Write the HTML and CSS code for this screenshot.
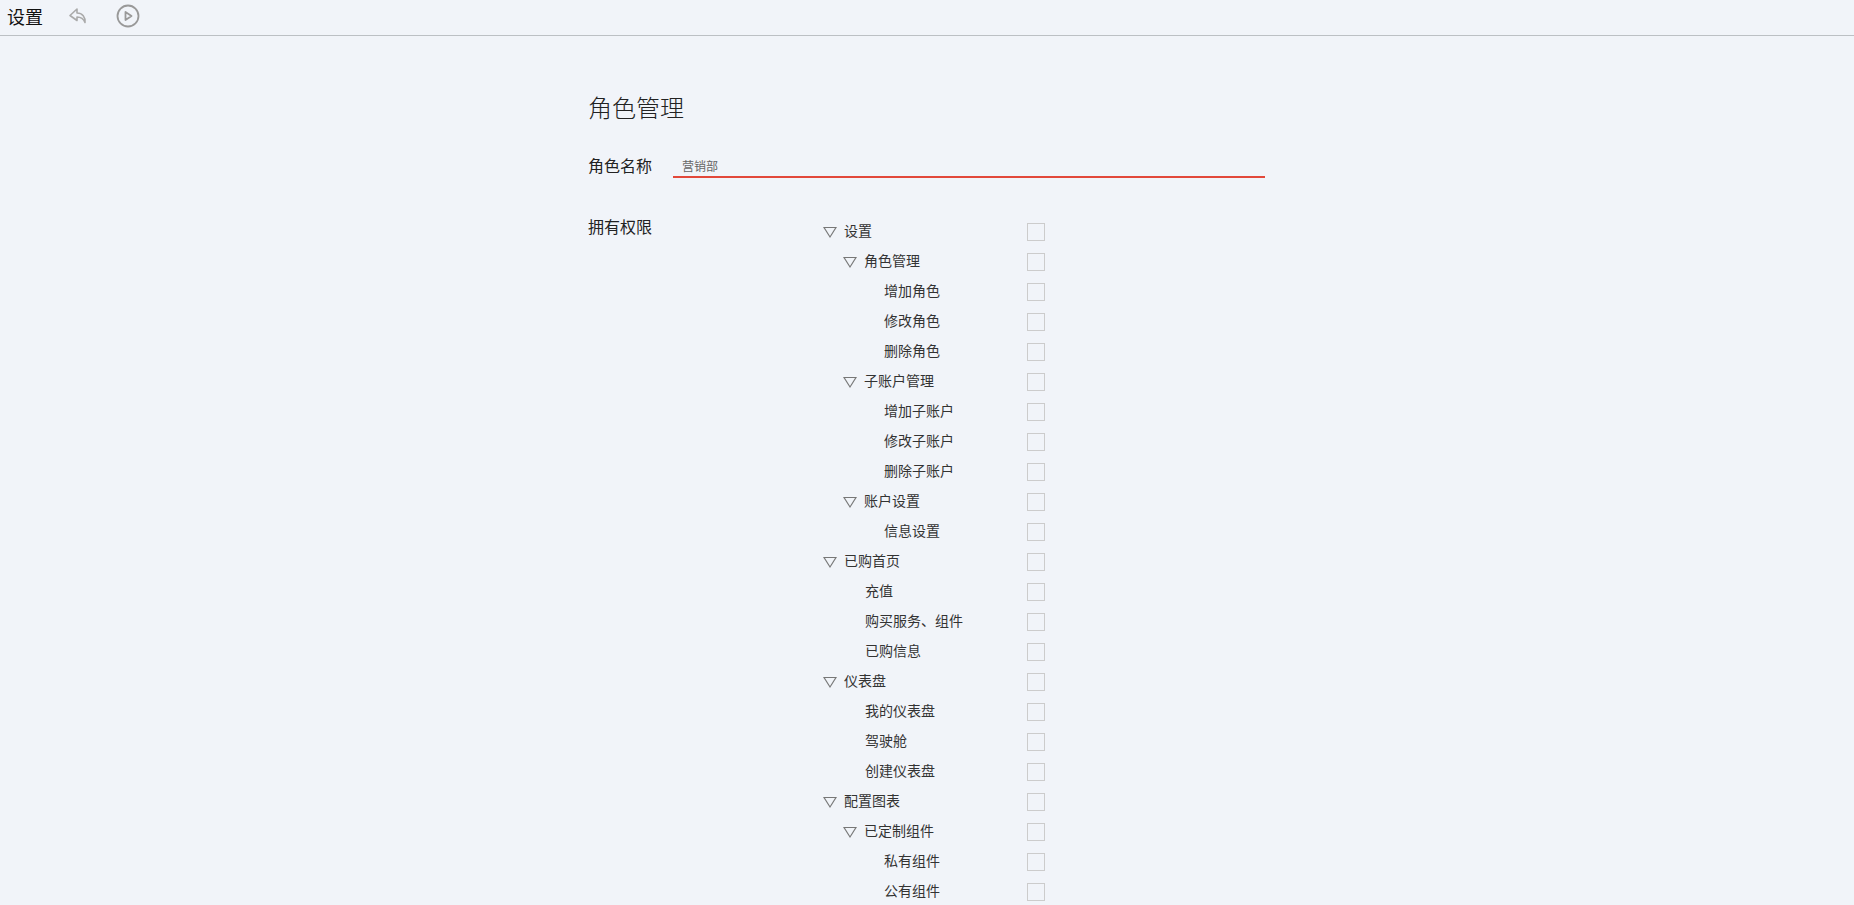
FILE: index.html
```html
<!DOCTYPE html>
<html lang="zh-CN">
  <head>
    <meta charset="UTF-8" />
    <title>设置</title>
    <link rel="stylesheet" href="styles.css">
  </head>
  <body>
    <div class="topbar">
      <span class="topbar-title">设置</span>
      <svg class="icon-back" width="20" height="20" viewBox="0 0 20 20" fill="none" stroke="#aaa" stroke-width="1.6" stroke-linejoin="round">
        <path d="M9 3 L2 9.5 L9 14.5 V11 C13 11 15.5 12.5 17 16.5 C17.5 11 14.5 7 9 7 Z" />
      </svg>
      <svg class="icon-play" width="24" height="24" viewBox="0 0 24 24" fill="none" stroke="#999" stroke-width="1.8" stroke-linejoin="round">
        <circle cx="12" cy="12" r="10.5" />
        <path d="M9.5 8 L15.5 12 L9.5 16 Z" />
      </svg>
    </div>

    <div class="content">
      <h1>角色管理</h1>

      <div class="name-row">
        <label>角色名称</label>
        <div class="name-input">营销部</div>
      </div>

      <div class="perm-row">
        <div class="perm-label">拥有权限</div>
        <div class="tree">
          <div class="row"><div class="name lv0"><i class="arrow"></i>设置</div><span class="check"></span></div>
          <div class="row"><div class="name lv1"><i class="arrow"></i>角色管理</div><span class="check"></span></div>
          <div class="row"><div class="name lv2">增加角色</div><span class="check"></span></div>
          <div class="row"><div class="name lv2">修改角色</div><span class="check"></span></div>
          <div class="row"><div class="name lv2">删除角色</div><span class="check"></span></div>
          <div class="row"><div class="name lv1"><i class="arrow"></i>子账户管理</div><span class="check"></span></div>
          <div class="row"><div class="name lv2">增加子账户</div><span class="check"></span></div>
          <div class="row"><div class="name lv2">修改子账户</div><span class="check"></span></div>
          <div class="row"><div class="name lv2">删除子账户</div><span class="check"></span></div>
          <div class="row"><div class="name lv1"><i class="arrow"></i>账户设置</div><span class="check"></span></div>
          <div class="row"><div class="name lv2">信息设置</div><span class="check"></span></div>
          <div class="row"><div class="name lv0"><i class="arrow"></i>已购首页</div><span class="check"></span></div>
          <div class="row"><div class="name lv1">充值</div><span class="check"></span></div>
          <div class="row"><div class="name lv1">购买服务、组件</div><span class="check"></span></div>
          <div class="row"><div class="name lv1">已购信息</div><span class="check"></span></div>
          <div class="row"><div class="name lv0"><i class="arrow"></i>仪表盘</div><span class="check"></span></div>
          <div class="row"><div class="name lv1">我的仪表盘</div><span class="check"></span></div>
          <div class="row"><div class="name lv1">驾驶舱</div><span class="check"></span></div>
          <div class="row"><div class="name lv1">创建仪表盘</div><span class="check"></span></div>
          <div class="row"><div class="name lv0"><i class="arrow"></i>配置图表</div><span class="check"></span></div>
          <div class="row"><div class="name lv1"><i class="arrow"></i>已定制组件</div><span class="check"></span></div>
          <div class="row"><div class="name lv2">私有组件</div><span class="check"></span></div>
          <div class="row"><div class="name lv2">公有组件</div><span class="check"></span></div>
        </div>
      </div>
    </div>
  </body>
</html>
```

FILE: styles.css
```css
html, body {
  height: 100%;
}

body {
  margin: 0;
  overflow: hidden;
  background-color: #f1f4f9;
  color: #222;
  font-family: "Noto Sans CJK SC", "Noto Sans", sans-serif;
}

.topbar {
  display: flex;
  align-items: center;
  height: 32px;
  padding: 0 0 3px 7px;
  border-bottom: 1px solid #bcc0c4;
}

.topbar-title {
  font-size: 18px;
  line-height: 32px;
  color: #111;
}

.icon-back {
  margin-left: 25px;
}

.icon-play {
  margin-left: 28px;
}

.content {
  padding: 53px 0 0 588px;
}

h1 {
  margin: 0;
  font-size: 24px;
  font-weight: 300;
  line-height: 36px;
  color: #222;
}

.name-row {
  display: flex;
  margin-top: 27px;
  height: 28px;
}

.name-row label {
  width: 85px;
  font-size: 16px;
  line-height: 26px;
}

.name-input {
  width: 583px;
  height: 22px;
  padding: 2px 0 0 9px;
  border-bottom: 2px solid #e2483a;
  font-size: 12px;
  line-height: 24px;
  color: #666;
}

.perm-row {
  display: flex;
  margin-top: 34px;
}

.perm-label {
  width: 235px;
  font-size: 16px;
  line-height: 24px;
}

.tree {
  width: 222px;
  padding-top: 3px;
}

.row {
  display: flex;
  justify-content: space-between;
  align-items: center;
  height: 30px;
}

.name {
  display: flex;
  align-items: center;
  padding-bottom: 5px;
  font-size: 14px;
  color: #333;
}

.lv1 {
  padding-left: 42px;
}

.lv2 {
  padding-left: 61px;
}

.arrow {
  position: relative;
  width: 0;
  height: 0;
  margin-top: 5px;
  margin-right: 7px;
  border-left: 7px solid transparent;
  border-right: 7px solid transparent;
  border-top: 11px solid #777;
}

.arrow::after {
  content: "";
  position: absolute;
  top: -10px;
  left: -5.5px;
  width: 0;
  height: 0;
  border-left: 5.5px solid transparent;
  border-right: 5.5px solid transparent;
  border-top: 8.7px solid #f1f4f9;
}

.lv1 .arrow {
  margin-left: -22px;
}

.check {
  box-sizing: border-box;
  width: 18px;
  height: 18px;
  border: 1px solid #ccc;
}
```
